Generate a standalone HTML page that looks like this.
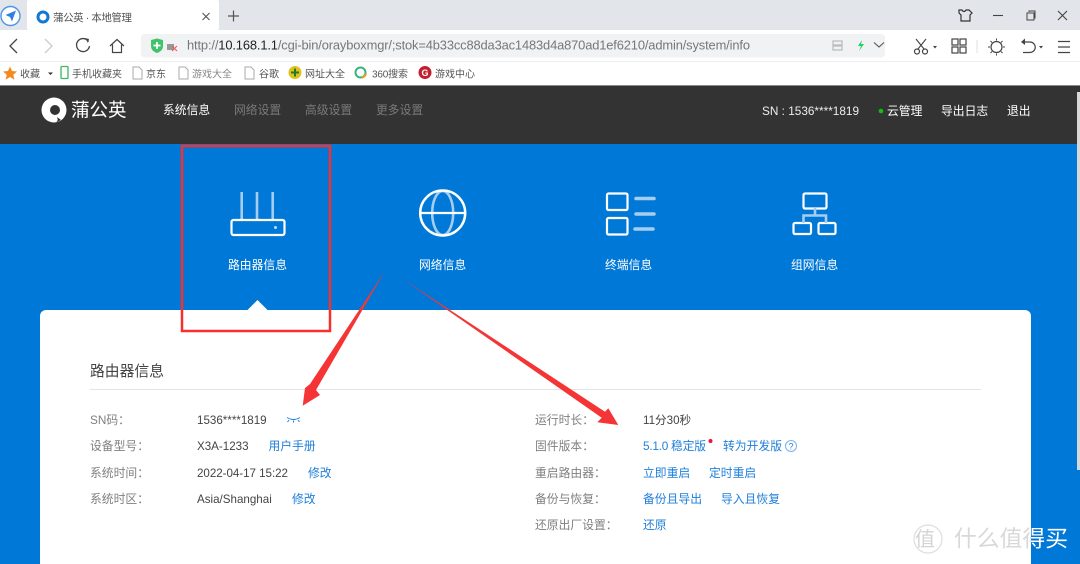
<!DOCTYPE html>
<html lang="zh"><head><meta charset="utf-8"><title>蒲公英 · 本地管理</title>
<style>
html,body{margin:0;padding:0;width:1080px;height:564px;overflow:hidden;background:#fff}
svg{display:block;position:absolute;left:0;top:0;filter:blur(.3px)}
text{font-family:"Liberation Sans","Noto Sans CJK SC",sans-serif;font-size:11.8px}
.b{fill:#1f7fd9}.l{fill:#808080}.v{fill:#444;font-size:11.6px}.w{fill:#fff}.n{fill:#7a7a7a}.k{font-size:10px;fill:#555}
.ic{fill:none;stroke:#fff;stroke-width:2.2}.ih{fill:none;stroke:#a5cdf0;stroke-width:2.6}
.t{fill:none;stroke:#444;stroke-width:1.2}
</style></head><body>
<svg width="1080" height="564" viewBox="0 0 1080 564" xmlns="http://www.w3.org/2000/svg">
<defs>
<clipPath id="oncard"><rect x="0" y="0" width="1031" height="564"/></clipPath>
<clipPath id="onblue"><rect x="1031" y="0" width="49" height="564"/></clipPath>
</defs>
<!-- chrome -->
<rect width="1080" height="30" fill="#e2e5e9"/>
<rect x="27" y="0" width="192" height="30" fill="#fff" rx="2"/>
<rect y="30" width="1080" height="56" fill="#fff"/>
<rect y="61" width="1080" height="1" fill="#eeeeee"/>
<circle cx="10.500" cy="16" r="9.500" fill="#fff" stroke="#4f94ea" stroke-width="1.400"/>
<path d="M16 10.500 L5.500 15 L10 17 L12 21.500Z" fill="#2f7fe3"/>
<circle cx="43" cy="17" r="5" fill="none" stroke="#1278d8" stroke-width="3"/>
<text x="53" y="21" style="font-size:10.500px" fill="#555" textLength="79">蒲公英 · 本地管理</text>
<path d="M202.500 13 l7 7 M209.500 13 l-7 7" stroke="#555" stroke-width="1.100" fill="none"/>
<path d="M228 16 h11 M233.500 10.500 v11" stroke="#555" stroke-width="1.200" fill="none"/>
<g transform="translate(0,-1)">
<path d="M17 40 l-7 7 l7 7" stroke="#444" stroke-width="1.300" fill="none"/>
<path d="M45 40 l7 7 l-7 7" stroke="#ccc" stroke-width="1.300" fill="none"/>
<path d="M88.500 42.500 A6.500 6.500 0 1 0 89.500 47" stroke="#444" stroke-width="1.300" fill="none"/><path d="M85 39 l4 1 l-1 4z" fill="#444"/>
<path d="M110 47 l7 -6.500 l7 6.500 M112.500 45.500 v8 h9 v-8" stroke="#444" stroke-width="1.200" fill="none"/>
</g>
<rect x="141" y="34" width="744" height="23.500" rx="4" fill="#f1f2f4"/>
<g transform="translate(0,-1)">
<path d="M151 41 l6 -1.500 l6 1.500 v6 c0 4 -3 6 -6 7 c-3 -1 -6 -3 -6 -7z" fill="#3fc46a"/>
<path d="M157 43 v7 M153.500 46.500 h7" stroke="#fff" stroke-width="1.800"/>
<rect x="167" y="45" width="7" height="6" fill="#999"/><path d="M172 47 l5 5 M177 47 l-5 5" stroke="#e55" stroke-width="1"/>
</g>
<text x="187" y="49.500" style="font-size:12.900px" fill="#777" textLength="563">http://<tspan fill="#222">10.168.1.1</tspan>/cgi-bin/orayboxmgr/;stok=4b33cc88da3ac1483d4a870ad1ef6210/admin/system/info</text>
<g transform="translate(0,-2)">
<path d="M833 43h9v4h-9zM833 48h9v4h-9z" fill="none" stroke="#bbb" stroke-width="1.200"/>
<path d="M862 42 l-4 6 h3 l-2 5 l5 -7 h-3z" fill="#1fd06a"/>
<path d="M874 44.500 l5 4.500 l5 -4.500" stroke="#555" stroke-width="1.100" fill="none"/>
</g>
<!-- window buttons -->
<path d="M959 10 l3 0 c1 2 3 2 4 0 l3 0 l3 3 l-2 2 v6 h-9 v-6 l-2 -2z" fill="none" stroke="#333" stroke-width="1.200"/>
<path d="M993 15.500 h10" stroke="#444" stroke-width="1.100"/>
<rect x="1027" y="13" width="7" height="7" fill="none" stroke="#444"/><path d="M1029 12 v-1 h6 v7 h-1" fill="none" stroke="#444"/>
<path d="M1058 11 l9 9 M1067 11 l-9 9" stroke="#444" stroke-width="1.100"/>
<!-- toolbar right -->
<g transform="translate(0,-1)">
<path d="M916 40 l8 10 M926 40 l-8 10" stroke="#444" stroke-width="1.100"/><circle cx="917" cy="52.500" r="2.500" class="t"/><circle cx="925" cy="52.500" r="2.500" class="t"/>
<path d="M933 47 h4 l-2 2.500z" fill="#444"/>
<g class="t"><rect x="952" y="40" width="6" height="6"/><rect x="960" y="40" width="6" height="6"/><rect x="952" y="48" width="6" height="6"/><rect x="960" y="48" width="6" height="6"/></g>
<path d="M977 41 v13" stroke="#e2e2e2"/>
<circle cx="996.500" cy="48" r="5.500" class="t"/><path d="M996.500 39.500v2M996.500 54.500v2M988 48h2M1003 48h2M990.500 42l1.500 1.500M1001 52.500l1.500 1.500M1002.500 42l-1.500 1.500M992 52.500l-1.500 1.500" stroke="#444"/>
<path d="M1023 43 h7 a5 5 0 0 1 0 10.500 h-7" class="t"/><path d="M1025 39.500 l-4 3.500 l4 3z" fill="#444"/>
<path d="M1039 47 h4 l-2 2.500z" fill="#444"/>
</g>
<path d="M1058 41.500 h12 M1058 47 h12 M1058 52.500 h12" stroke="#444" stroke-width="1.200"/>
<!-- bookmarks -->
<g transform="translate(0,-1.500)">
<path d="M10 68 l2 4.500 l5 .500 l-3.700 3.200 l1.100 5 l-4.400 -2.700 l-4.400 2.700 l1.100 -5 l-3.700 -3.200 l5 -.500z" fill="#f28a1e"/>
<text x="20" y="79" class="k">收藏</text><path d="M48 74 h5 l-2.500 2.500z" fill="#333"/>
<rect x="61" y="68" width="7" height="12" rx="1" fill="none" stroke="#3bb75e" stroke-width="1.300"/>
<text x="72" y="79" class="k">手机收藏夹</text>
<path d="M133 68.500 h6 l3 3 v9 h-9z" fill="none" stroke="#aaa"/><text x="146" y="79" class="k">京东</text>
<path d="M179 68.500 h6 l3 3 v9 h-9z" fill="none" stroke="#aaa"/><text x="192" y="79" class="k" style="fill:#888">游戏大全</text>
<path d="M245 68.500 h6 l3 3 v9 h-9z" fill="none" stroke="#aaa"/><text x="259" y="79" class="k">谷歌</text>
<circle cx="295" cy="74" r="6.500" fill="#e0c21c"/><path d="M291 74h8M295 70v8" stroke="#1f7a2a" stroke-width="2"/>
<text x="305" y="79" class="k">网址大全</text>
<circle cx="360.500" cy="74" r="5" fill="none" stroke="#36b37e" stroke-width="2"/><path d="M362 79 a5 5 0 0 0 4 -4" fill="none" stroke="#f0a020" stroke-width="2"/>
<text x="372" y="79" class="k" textLength="36">360搜索</text>
<circle cx="425" cy="74" r="6.500" fill="#c2202c"/><text x="421.500" y="77.500" style="font-size:9px;font-weight:bold" fill="#fff">G</text>
<text x="435" y="79" class="k">游戏中心</text>
</g>
<!-- page -->
<rect y="85" width="1080" height="479" fill="#0078d7"/>
<rect y="85" width="1080" height="1.500" fill="#888"/>
<rect y="86" width="1080" height="58" fill="#333"/>
<circle cx="54" cy="110" r="12.500" fill="#fff"/><circle cx="55" cy="110" r="5" fill="#333"/><path d="M57 117 q2 4 -2 6 l6 -3z" fill="#333"/>
<text x="71" y="116.500" style="font-size:18.500px" class="w">蒲公英</text>
<text x="163" y="114" class="w">系统信息</text><text x="234" y="114" class="n">网络设置</text><text x="305" y="114" class="n">高级设置</text><text x="376" y="114" class="n">更多设置</text>
<text x="762" y="115" class="w" style="fill:#eee" textLength="97">SN : 1536****1819</text>
<circle cx="881" cy="111" r="2.300" fill="#0fc00f"/>
<text x="887" y="115" class="w">云管理</text><text x="941" y="115" class="w">导出日志</text><text x="1007" y="115" class="w">退出</text>
<!-- icons -->
<path class="ih" d="M241.700 192v27M257 192v27M272.700 192v27"/>
<rect x="231.500" y="220" width="53" height="15" rx="2" class="ic"/><circle cx="275.500" cy="227.500" r="1.500" fill="#bcdcf6"/>
<ellipse cx="442.700" cy="213" rx="10.500" ry="22" class="ih"/>
<circle cx="442.700" cy="213" r="22.500" class="ic" style="stroke-width:2.500"/><path d="M420 213h45" class="ic"/>
<rect x="607" y="193.500" width="20.500" height="16.500" rx="1.500" class="ic"/><rect x="607" y="218" width="20.500" height="16.500" rx="1.500" class="ic"/>
<path d="M636 198.500h18M636 214h18M635 229h18" stroke="#a5cdf0" stroke-width="3.500" stroke-linecap="round"/>
<rect x="803.500" y="193.500" width="23" height="15" rx="1.500" class="ic"/><rect x="793.500" y="223" width="17.500" height="11" rx="1.500" class="ic"/><rect x="818.500" y="223" width="17" height="11" rx="1.500" class="ic"/>
<path class="ih" d="M815 208v7M803.500 223v-7.500h22.500v7.500"/>
<text x="228" y="269" class="w">路由器信息</text><text x="419" y="269" class="w">网络信息</text><text x="605" y="269" class="w">终端信息</text><text x="791" y="269" class="w">组网信息</text>
<!-- card -->
<path d="M40 564V316a6 6 0 0 1 6-6H1025a6 6 0 0 1 6 6V564z" fill="#fff"/>
<path d="M247.500 310 L257.500 300 L267.500 310z" fill="#fff"/>
<text x="90" y="376" style="font-size:14.800px" fill="#444">路由器信息</text>
<rect x="90" y="389" width="891" height="1" fill="#e4e4e4"/>
<text x="90" y="424" class="l">SN码：</text><text x="197" y="424" class="v">1536****1819</text>
<path d="M287 417.500 q6.500 4 13 0 M289 420l-1.500 2M293.500 420.500v2M298 420l1.500 2" fill="none" stroke="#1f7fd9"/>
<text x="90" y="450" class="l">设备型号：</text><text x="197" y="450" class="v">X3A-1233</text><text x="268.500" y="450" class="b">用户手册</text>
<text x="90" y="477" class="l">系统时间：</text><text x="197" y="477" class="v" textLength="91">2022-04-17 15:22</text><text x="308" y="477" class="b">修改</text>
<text x="90" y="503" class="l">系统时区：</text><text x="197" y="503" class="v">Asia/Shanghai</text><text x="292" y="503" class="b">修改</text>
<text x="535" y="424" class="l">运行时长：</text><text x="643" y="424" class="v">11分30秒</text>
<text x="535" y="450" class="l">固件版本：</text><text x="643" y="450" class="b" textLength="63">5.1.0 稳定版</text><circle cx="710.500" cy="441" r="2" fill="#f0103c"/><text x="723" y="450" class="b">转为开发版</text>
<circle cx="791" cy="446" r="5.500" fill="none" stroke="#7ab2e8"/><text x="788.500" y="449.500" style="font-size:9px" class="b">?</text>
<text x="535" y="477" class="l">重启路由器：</text><text x="643" y="477" class="b">立即重启</text><text x="709" y="477" class="b">定时重启</text>
<text x="535" y="503" class="l">备份与恢复：</text><text x="643" y="503" class="b">备份且导出</text><text x="721" y="503" class="b">导入且恢复</text>
<text x="535" y="529" class="l">还原出厂设置：</text><text x="643" y="529" class="b">还原</text>
<!-- watermark -->
<circle cx="928" cy="539" r="14" fill="none" stroke="#dedede" stroke-width="1.200"/>
<text x="915" y="546" style="font-size:20px" fill="#d4d4d4">值</text>
<g clip-path="url(#oncard)"><text x="954" y="546.500" style="font-size:22.800px" fill="#d8d8d8">什么值得买</text></g>
<g clip-path="url(#onblue)"><text x="954" y="546.500" style="font-size:22.800px" fill="#fff">什么值得买</text></g>
<!-- scrollbar -->
<rect x="1077" y="92" width="3" height="378" fill="#d8d8d8"/>
<!-- annotations -->
<rect x="182" y="146" width="148" height="185" fill="none" stroke="#f5302e" stroke-width="2.500"/>
<path d="M385 271 L310 384 L305 388 L302.700 405.700 L320 395 L316 390Z" fill="#f53535"/>
<path d="M401.700 278.300 L605 411.700 L608.300 408.300 L618.300 425 L597.300 422.300 L601.700 417.700Z" fill="#f53535"/>
</svg>
</body></html>
